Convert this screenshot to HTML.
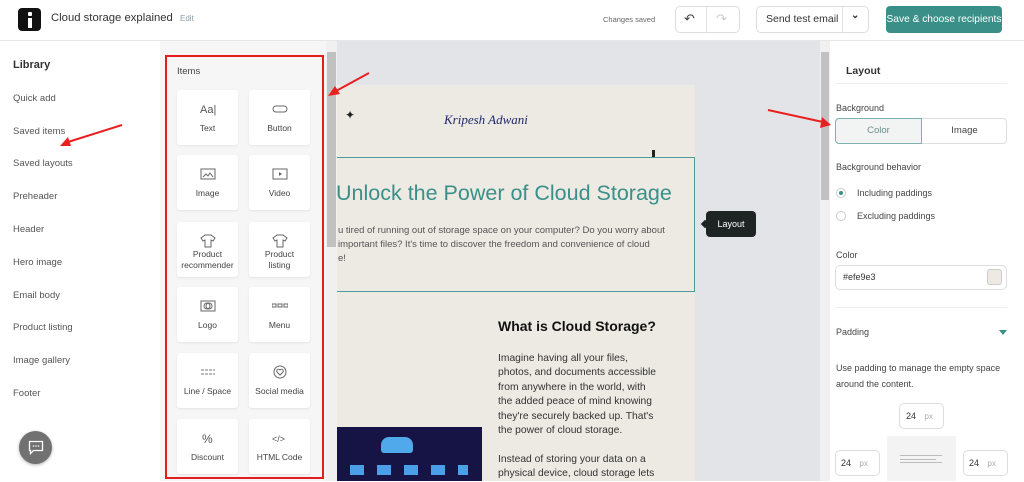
<!DOCTYPE html>
<html><head><meta charset="utf-8"><style>
*{box-sizing:border-box;margin:0;padding:0}
body{width:1024px;height:481px;overflow:hidden;font-family:"Liberation Sans",sans-serif;background:#fff;position:relative;color:#333}
.a{position:absolute;white-space:nowrap}
.hdr{left:0;top:0;width:1024px;height:41px;background:#fff;border-bottom:1px solid #e6e6e6}
.lib{font-size:9.5px;color:#555}
.card{position:absolute;width:61px;height:55px;background:#fff;border-radius:3px;box-shadow:0 1px 2px rgba(0,0,0,.08);text-align:center;font-size:8.5px;color:#444}
.card svg{position:absolute;left:23px;top:12px}
.card span{position:absolute;left:0;right:0;top:33px;line-height:11px}
.rp{font-size:9px;color:#444}
.btn{border:1px solid #ddd;border-radius:5px;background:#fff}
</style></head><body>
<div class="a hdr"></div>
<div class="a" style="left:18px;top:8px;width:23px;height:23px;background:#111;border-radius:4px"></div>
<div class="a" style="left:28px;top:12px;width:4px;height:4px;background:#fff;border-radius:1px"></div>
<div class="a" style="left:28px;top:18px;width:4px;height:10px;background:#fff"></div>
<div class="a" style="left:51px;top:12px;font-size:11.3px;color:#333">Cloud storage explained</div>
<div class="a" style="left:180px;top:14px;font-size:8px;color:#8a9aa8">Edit</div>
<div class="a" style="left:603px;top:15px;font-size:7.5px;color:#666">Changes saved</div>
<div class="a btn" style="left:675px;top:6px;width:65px;height:27px"></div>
<div class="a" style="left:706px;top:6px;width:1px;height:27px;background:#e3e3e3"></div>
<div class="a" style="left:684px;top:11px;font-size:13px;color:#444">↶</div>
<div class="a" style="left:716px;top:11px;font-size:13px;color:#ccc">↷</div>
<div class="a btn" style="left:756px;top:6px;width:113px;height:27px"></div>
<div class="a" style="left:842px;top:6px;width:1px;height:27px;background:#e3e3e3"></div>
<div class="a" style="left:766px;top:13px;font-size:10.5px;color:#333">Send test email</div>
<div class="a" style="left:851px;top:10px;font-size:10px;color:#333;font-weight:bold">⌄</div>
<div class="a" style="left:886px;top:6px;width:116px;height:27px;background:#3a9089;border-radius:4px;color:#fff;font-size:10.2px;line-height:27px;text-align:center">Save &amp; choose recipients</div>

<div class="a" style="left:13px;top:59px;font-size:11px;color:#333;font-weight:bold">Library</div>
<div class="a lib" style="left:13px;top:93px">Quick add</div>
<div class="a lib" style="left:13px;top:126px">Saved items</div>
<div class="a lib" style="left:13px;top:158px">Saved layouts</div>
<div class="a lib" style="left:13px;top:191px">Preheader</div>
<div class="a lib" style="left:13px;top:224px">Header</div>
<div class="a lib" style="left:13px;top:257px">Hero image</div>
<div class="a lib" style="left:13px;top:290px">Email body</div>
<div class="a lib" style="left:13px;top:322px">Product listing</div>
<div class="a lib" style="left:13px;top:355px">Image gallery</div>
<div class="a lib" style="left:13px;top:388px">Footer</div>
<div class="a" style="left:19px;top:431px;width:33px;height:33px;border-radius:50%;background:#717171;box-shadow:0 1px 3px rgba(0,0,0,.3)"></div>
<svg class="a" style="left:28px;top:440px" width="16" height="15"><path d="M1.5 1.5h13v9h-9l-3 3v-3h-1z" fill="none" stroke="#fff" stroke-width="1.3"/><circle cx="5.5" cy="6" r=".8" fill="#fff"/><circle cx="8" cy="6" r=".8" fill="#fff"/><circle cx="10.5" cy="6" r=".8" fill="#fff"/></svg>
<svg class="a" style="left:50px;top:120px" width="80" height="30"><line x1="72" y1="5" x2="18" y2="22" stroke="#e8201f" stroke-width="2"/><polygon points="10,26 18,17 21,26" fill="#e8201f"/></svg>

<div class="a" style="left:160px;top:41px;width:166px;height:440px;background:#f6f6f6"></div>
<div class="a" style="left:165px;top:55px;width:159px;height:424px;border:2px solid #e41e1e"></div>
<div class="a" style="left:177px;top:66px;font-size:9.5px;color:#444">Items</div>
<div class="card" style="left:177px;top:90px"><svg width="16" height="14"><text x="0" y="11" font-size="11" fill="#555" font-family="Liberation Sans">Aa|</text></svg><span>Text</span></div>
<div class="card" style="left:249px;top:90px"><svg width="16" height="14"><rect x="1" y="4" width="14" height="6" rx="3" fill="none" stroke="#666"/></svg><span>Button</span></div>
<div class="card" style="left:177px;top:155px"><svg width="16" height="14"><rect x="1" y="2" width="14" height="10" fill="none" stroke="#666"/><path d="M3 10l3-3 2 2 2-3 3 4" fill="none" stroke="#666"/></svg><span>Image</span></div>
<div class="card" style="left:249px;top:155px"><svg width="16" height="14"><rect x="1" y="2" width="14" height="10" fill="none" stroke="#666"/><path d="M7 5v4l3-2z" fill="#666"/></svg><span>Video</span></div>
<div class="card" style="left:177px;top:222px"><svg width="16" height="14"><path d="M5 1L1 4l2 3 2-1v7h6V6l2 1 2-3-4-3H5z" fill="none" stroke="#666"/></svg><span style="top:27px">Product<br>recommender</span></div>
<div class="card" style="left:249px;top:222px"><svg width="16" height="14"><path d="M5 1L1 4l2 3 2-1v7h6V6l2 1 2-3-4-3H5z" fill="none" stroke="#666"/></svg><span style="top:27px">Product<br>listing</span></div>
<div class="card" style="left:177px;top:287px"><svg width="16" height="14"><rect x="1" y="2" width="14" height="10" fill="none" stroke="#666"/><circle cx="7" cy="7" r="3" fill="none" stroke="#666"/><circle cx="9" cy="7" r="3" fill="none" stroke="#666"/></svg><span>Logo</span></div>
<div class="card" style="left:249px;top:287px"><svg width="16" height="14"><rect x="0" y="5" width="4" height="3" fill="none" stroke="#666"/><rect x="6" y="5" width="4" height="3" fill="none" stroke="#666"/><rect x="12" y="5" width="4" height="3" fill="none" stroke="#666"/></svg><span>Menu</span></div>
<div class="card" style="left:177px;top:353px"><svg width="16" height="14"><path d="M1 5h14M1 9h14" stroke="#777" stroke-dasharray="3 1"/></svg><span>Line / Space</span></div>
<div class="card" style="left:249px;top:353px"><svg width="16" height="14"><circle cx="8" cy="7" r="6" fill="none" stroke="#666"/><path d="M8 10L5 7a1.5 1.5 0 013-2 1.5 1.5 0 013 2z" fill="none" stroke="#666"/></svg><span>Social media</span></div>
<div class="card" style="left:177px;top:419px"><svg width="16" height="14"><text x="2" y="12" font-size="12" fill="#555" font-family="Liberation Sans">%</text></svg><span>Discount</span></div>
<div class="card" style="left:249px;top:419px"><svg width="16" height="14"><text x="0" y="11" font-size="9" fill="#555" font-family="Liberation Sans">&lt;/&gt;</text></svg><span>HTML Code</span></div>

<div class="a" style="left:326px;top:41px;width:11px;height:440px;background:#f0f0f0"></div>
<div class="a" style="left:327px;top:52px;width:9px;height:195px;background:#c1c1c1"></div>
<div class="a" style="left:337px;top:41px;width:483px;height:440px;background:#e3e4e8"></div>
<div class="a" style="left:337px;top:85px;width:358px;height:396px;background:#ede9e3"></div>
<svg class="a" style="left:322px;top:70px" width="50" height="30"><line x1="47" y1="3" x2="14" y2="21" stroke="#e8201f" stroke-width="2"/><polygon points="6,26 13,16 18,24" fill="#e8201f"/></svg>
<div class="a" style="left:345px;top:108px;font-size:12px;color:#222">✦</div>
<div class="a" style="left:444px;top:112px;font-family:'Liberation Serif',serif;font-style:italic;font-size:13px;color:#1f2a6b">Kripesh Adwani</div>
<div class="a" style="left:652px;top:150px;width:3px;height:8px;background:#222"></div>
<div class="a" style="left:337px;top:157px;width:358px;height:135px;border:1.5px solid #4a9c99;border-left:none"></div>
<div class="a" style="left:336px;top:181px;font-size:21.5px;color:#3a9089">Unlock the Power of Cloud Storage</div>
<div class="a" style="left:338px;top:224px;font-size:9.5px;color:#555;line-height:14px">u tired of running out of storage space on your computer? Do you worry about<br> important files? It's time to discover the freedom and convenience of cloud<br>e!</div>
<div class="a" style="left:706px;top:211px;width:50px;height:26px;background:#1e2423;border-radius:4px;color:#fff;font-size:9px;line-height:26px;text-align:center">Layout</div>
<div class="a" style="left:702px;top:221px;width:6px;height:6px;background:#1e2423;transform:rotate(45deg)"></div>
<div class="a" style="left:498px;top:318px;font-size:14px;font-weight:bold;color:#111">What is Cloud Storage?</div>
<div class="a" style="left:498px;top:352px;font-size:10.3px;color:#333;line-height:14.4px">Imagine having all your files,<br>photos, and documents accessible<br>from anywhere in the world, with<br>the added peace of mind knowing<br>they're securely backed up. That's<br>the power of cloud storage.<br><br>Instead of storing your data on a<br>physical device, cloud storage lets</div>
<div class="a" style="left:337px;top:427px;width:145px;height:54px;background:#161445"></div>
<div class="a" style="left:381px;top:437px;width:32px;height:16px;background:#4fa9ea;border-radius:8px 8px 3px 3px"></div>
<div class="a" style="left:350px;top:465px;width:118px;height:10px;background:repeating-linear-gradient(90deg,#4a9fe8 0 14px,transparent 14px 27px)"></div>

<div class="a" style="left:820px;top:41px;width:10px;height:440px;background:#f0f0f0"></div>
<div class="a" style="left:821px;top:52px;width:8px;height:148px;background:#c1c1c1"></div>
<svg class="a" style="left:765px;top:105px" width="70" height="25"><line x1="3" y1="5" x2="58" y2="17" stroke="#e8201f" stroke-width="2"/><polygon points="66,20 55,23 57,12" fill="#e8201f"/></svg>
<div class="a" style="left:846px;top:65px;font-size:10.5px;font-weight:bold;color:#333">Layout</div>
<div class="a" style="left:835px;top:83px;width:172px;height:1px;background:#eee"></div>
<div class="a rp" style="left:836px;top:103px">Background</div>
<div class="a" style="left:835px;top:118px;width:172px;height:26px;border:1px solid #ddd;border-radius:4px"></div>
<div class="a" style="left:835px;top:118px;width:87px;height:26px;border:1px solid #7ab3b0;border-radius:4px 0 0 4px;background:#f2f3f3;color:#6b8f8d;font-size:9.5px;line-height:24px;text-align:center">Color</div>
<div class="a" style="left:922px;top:118px;width:85px;height:26px;color:#444;font-size:9.5px;line-height:26px;text-align:center">Image</div>
<div class="a rp" style="left:836px;top:162px">Background behavior</div>
<div class="a" style="left:836px;top:188px;width:10px;height:10px;border:1px solid #ccc;border-radius:50%"></div>
<div class="a" style="left:839px;top:191px;width:4px;height:4px;background:#3a9089;border-radius:50%"></div>
<div class="a rp" style="left:857px;top:188px">Including paddings</div>
<div class="a" style="left:836px;top:211px;width:10px;height:10px;border:1px solid #ccc;border-radius:50%"></div>
<div class="a rp" style="left:857px;top:211px">Excluding paddings</div>
<div class="a rp" style="left:836px;top:250px">Color</div>
<div class="a" style="left:835px;top:265px;width:172px;height:25px;border:1px solid #ddd;border-radius:5px"></div>
<div class="a rp" style="left:843px;top:272px;color:#333">#efe9e3</div>
<div class="a" style="left:987px;top:269px;width:15px;height:16px;background:#efe9e3;border:1px solid #ccc;border-radius:3px"></div>
<div class="a" style="left:835px;top:307px;width:172px;height:1px;background:#eee"></div>
<div class="a rp" style="left:836px;top:327px">Padding</div>
<div class="a" style="left:999px;top:330px;width:0;height:0;border-left:4px solid transparent;border-right:4px solid transparent;border-top:5px solid #3a9089"></div>
<div class="a rp" style="left:836px;top:360px;line-height:16px">Use padding to manage the empty space<br>around the content.</div>
<div class="a" style="left:899px;top:403px;width:45px;height:26px;border:1px solid #ddd;border-radius:5px;font-size:9px;line-height:24px;padding-left:6px">24 <span style="color:#aaa;font-size:8px;margin-left:6px">px</span></div>
<div class="a" style="left:887px;top:436px;width:69px;height:45px;background:#f3f3f3"></div>
<div class="a" style="left:900px;top:455px;width:42px;height:8px;border-top:1px solid #bbb;border-bottom:1px solid #bbb"></div>
<div class="a" style="left:900px;top:459px;width:36px;height:1px;background:#bbb"></div>
<div class="a" style="left:835px;top:450px;width:45px;height:26px;border:1px solid #ddd;border-radius:5px;font-size:9px;line-height:24px;padding-left:5px">24 <span style="color:#aaa;font-size:8px;margin-left:6px">px</span></div>
<div class="a" style="left:963px;top:450px;width:45px;height:26px;border:1px solid #ddd;border-radius:5px;font-size:9px;line-height:24px;padding-left:5px">24 <span style="color:#aaa;font-size:8px;margin-left:6px">px</span></div>
</body></html>
